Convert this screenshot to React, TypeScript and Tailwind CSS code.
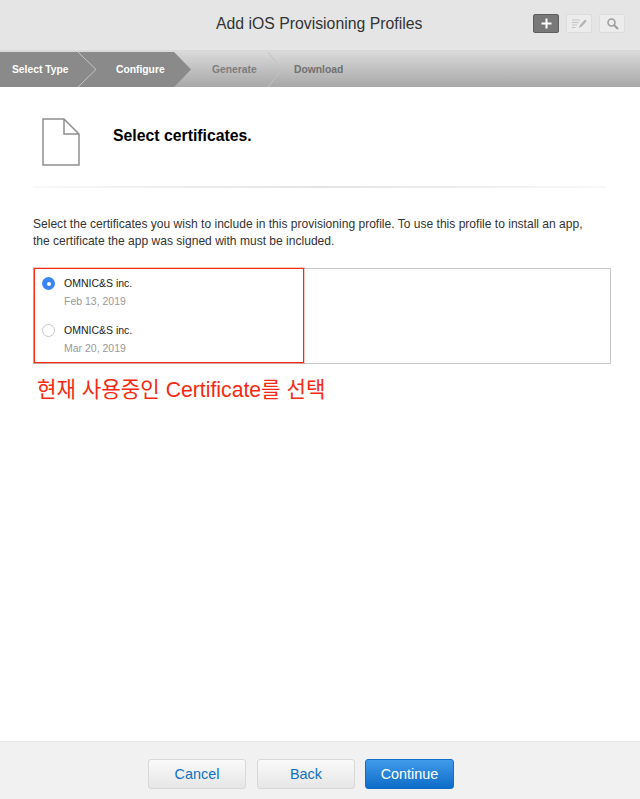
import React from "react";

const Chevron = ({ color, w }: { color: string; w: number }) => (
  <svg width={w} height="35" viewBox={`0 0 ${w} 35`} className="absolute top-0 right-0" fill="none">
    <path d={`M1 0 L${w - 1} 17.5 L1 35`} stroke={color} strokeWidth="1" />
  </svg>
);

const Radio = ({ on }: { on: boolean }) =>
  on ? (
    <div className="w-[13px] h-[13px] rounded-full bg-[#3b86f7] flex items-center justify-center shrink-0">
      <div className="w-[4px] h-[4px] rounded-full bg-white" />
    </div>
  ) : (
    <div className="w-[13px] h-[13px] rounded-full border border-[#c8c8c8] bg-white shrink-0" />
  );

const Cert = ({ on, date }: { on: boolean; date: string }) => (
  <div className="flex gap-[9px] h-[47px] pl-[7px]">
    <div className="pt-[2px]">
      <Radio on={on} />
    </div>
    <div>
      <div className="text-[10.5px] leading-[17px] text-[#222]">OMNIC&amp;S inc.</div>
      <div className="text-[10.5px] leading-[17px] mt-[1px] text-[#999]">{date}</div>
    </div>
  </div>
);

const IconBtn = ({ children, active }: { children: React.ReactNode; active?: boolean }) => (
  <div
    className={
      active
        ? "w-[26px] h-[19px] rounded-[2px] bg-[#787878] border border-[#5f5f5f] flex items-center justify-center"
        : "w-[26px] h-[19px] rounded-[2px] bg-[#ececec] border border-[#dcdcdc] flex items-center justify-center"
    }
  >
    {children}
  </div>
);

const Btn = ({ label }: { label: string }) => (
  <div className="w-[98px] h-[30px] pt-[1px] rounded-[3px] border border-[#d8d8d8] bg-gradient-to-b from-[#fafafa] to-[#e6e6e6] flex items-center justify-center text-[14.4px] text-[#0f6fc6]">
    {label}
  </div>
);

export default function App() {
  return (
    <div className="w-[640px] h-[799px] flex flex-col bg-white overflow-hidden font-['Liberation_Sans',Arial,sans-serif]">
      {/* Title bar */}
      <div className="h-[52px] shrink-0 bg-[#e5e5e5] border-b-2 border-[#d9d9d9] flex items-center pl-[216px] pr-[15px] pb-[2px]">
        <div className="text-[15.8px] text-[#333] leading-none">Add iOS Provisioning Profiles</div>
        <div className="ml-auto flex gap-[7px] mt-[-2px]">
          <IconBtn active>
            <svg width="11" height="11" viewBox="0 0 11 11">
              <path d="M5.500 0.500v10M0.500 5.500h10" stroke="#fff" strokeWidth="2" />
            </svg>
          </IconBtn>
          <IconBtn>
            <svg width="17" height="11" viewBox="0 0 17 11" fill="none">
              <path d="M1 2h8M1 4.500h6.500M1 7h5M1 9.500h3.500" stroke="#c4c4c4" strokeWidth="1" />
              <path d="M8 10l1-3 5-5.500 1.800 1.500-5 5.500z" fill="#b4b4b4" />
            </svg>
          </IconBtn>
          <IconBtn>
            <svg width="13" height="13" viewBox="0 0 13 13" fill="none">
              <circle cx="5.500" cy="5.500" r="3.500" stroke="#9e9e9e" strokeWidth="1.600" />
              <path d="M8.200 8.200L12 12" stroke="#9e9e9e" strokeWidth="2" />
            </svg>
          </IconBtn>
        </div>
      </div>

      {/* Steps */}
      <div className="h-[35px] shrink-0 flex text-[10.3px] font-bold bg-gradient-to-b from-[#d9d9d9] to-[#a8a8a8]">
        <div className="relative w-[97px] shrink-0 bg-[#8a8a8a] flex items-center pl-[12px] text-white">
          Select Type
          <Chevron color="#c4c4c4" w={20} />
        </div>
        <div className="w-[94px] shrink-0 bg-[#8a8a8a] [clip-path:polygon(0_0,82%_0,100%_50%,82%_100%,0_100%)] flex items-center pl-[19px] text-white">
          Configure
        </div>
        <div className="relative w-[92px] shrink-0 flex items-center pl-[21px] text-[#7d7d7d]">
          Generate
          <Chevron color="#c2c2c2" w={16} />
        </div>
        <div className="flex items-center pl-[11px] text-[#707070]">Download</div>
      </div>

      {/* Main */}
      <div className="flex-1 px-[33px]">
        <div className="flex h-[99px] pt-[31px] gap-[33px]">
          <svg width="38" height="48" viewBox="0 0 38 48" fill="none" className="shrink-0 ml-[9px]">
            <path d="M1 1H22L37 16V47H1Z M22 1V16H37" stroke="#8f8f8f" strokeWidth="1.500" fill="#fff" />
          </svg>
          <div className="text-[15.8px] font-bold text-black leading-[20px] mt-[-32px] self-center">Select certificates.</div>
        </div>
        <div className="h-[2px] w-[573px] bg-gradient-to-r from-[#f8f8f8] via-[#e4e4e4] to-[#f8f8f8]" />
        <p className="mt-[28px] text-[12.05px] leading-[17px] text-[#333] whitespace-nowrap">
          Select the certificates you wish to include in this provisioning profile. To use this profile to install an app,
          <br />
          the certificate the app was signed with must be included.
        </p>
        <div className="mt-[18px] w-[578px] h-[96px] border border-[#c8c8c8]">
          <div className="w-[270px] h-[95px] mt-[-1px] border border-[#f52a12] shadow-[0_0_0_1px_rgba(245,42,18,0.25)] pt-[6px]">
            <Cert on date="Feb 13, 2019" />
            <Cert on={false} date="Mar 20, 2019" />
          </div>
        </div>
        <div className="mt-[14px] ml-[4px] text-[21.2px] leading-[24px] text-[#f52a12] font-['Liberation_Sans','Noto_Sans_CJK_KR',sans-serif]">
          현재 사용중인 Certificate를 선택
        </div>
      </div>

      {/* Footer */}
      <div className="h-[58px] shrink-0 bg-[#f1f1f1] border-t border-[#e8e8e8] flex gap-[11px] pl-[148px] pt-[17px]">
        <Btn label="Cancel" />
        <Btn label="Back" />
        <div className="w-[89px] h-[30px] pt-[1px] ml-[-1px] rounded-[3px] border border-[#0f6fc6] bg-gradient-to-b from-[#3f9bea] to-[#0a6cc8] flex items-center justify-center text-[14.4px] text-white">
          Continue
        </div>
      </div>
    </div>
  );
}
